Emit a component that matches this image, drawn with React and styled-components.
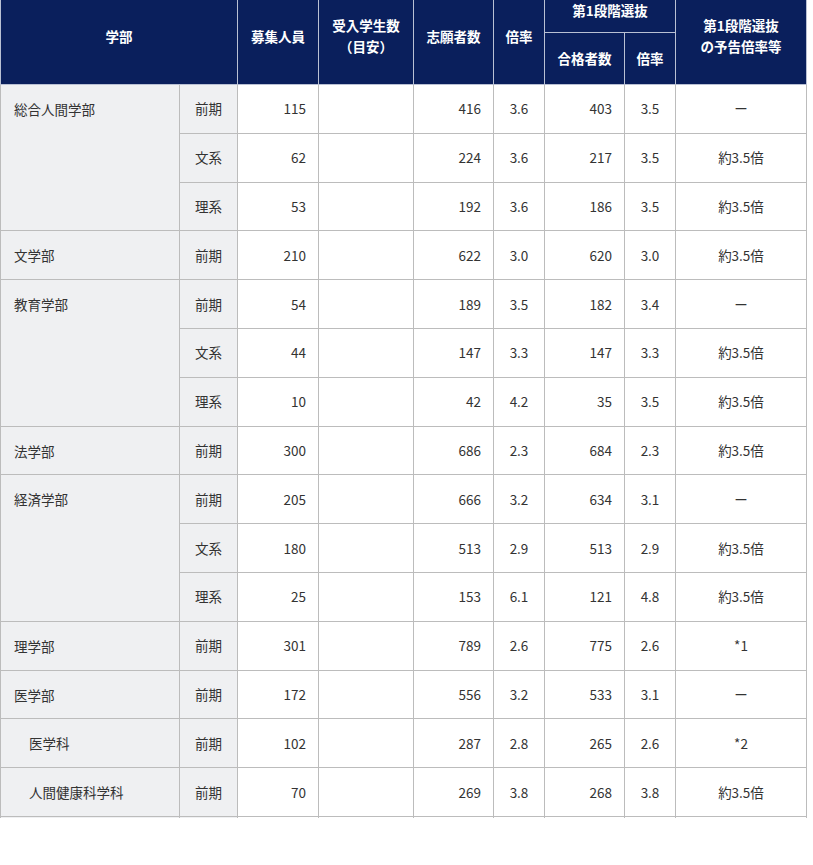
import React from 'react';
import styled, { createGlobalStyle } from 'styled-components';

const GlobalStyle = createGlobalStyle`
  html, body {
    margin: 0;
    padding: 0;
    background: #fff;
  }
  body {
    font-family: 'Noto Sans CJK JP', 'Noto Sans', sans-serif;
    color: #333;
  }
`;

const rows = [
  { name: '総合人間学部', span: 3, term: '前期', cap: 115, app: 416, r1: '3.6', pass: 403, r2: '3.5', note: 'ー' },
  { term: '文系', cap: 62, app: 224, r1: '3.6', pass: 217, r2: '3.5', note: '約3.5倍' },
  { term: '理系', cap: 53, app: 192, r1: '3.6', pass: 186, r2: '3.5', note: '約3.5倍' },
  { name: '文学部', span: 1, term: '前期', cap: 210, app: 622, r1: '3.0', pass: 620, r2: '3.0', note: '約3.5倍' },
  { name: '教育学部', span: 3, term: '前期', cap: 54, app: 189, r1: '3.5', pass: 182, r2: '3.4', note: 'ー' },
  { term: '文系', cap: 44, app: 147, r1: '3.3', pass: 147, r2: '3.3', note: '約3.5倍' },
  { term: '理系', cap: 10, app: 42, r1: '4.2', pass: 35, r2: '3.5', note: '約3.5倍' },
  { name: '法学部', span: 1, term: '前期', cap: 300, app: 686, r1: '2.3', pass: 684, r2: '2.3', note: '約3.5倍' },
  { name: '経済学部', span: 3, term: '前期', cap: 205, app: 666, r1: '3.2', pass: 634, r2: '3.1', note: 'ー' },
  { term: '文系', cap: 180, app: 513, r1: '2.9', pass: 513, r2: '2.9', note: '約3.5倍' },
  { term: '理系', cap: 25, app: 153, r1: '6.1', pass: 121, r2: '4.8', note: '約3.5倍' },
  { name: '理学部', span: 1, term: '前期', cap: 301, app: 789, r1: '2.6', pass: 775, r2: '2.6', note: '*1' },
  { name: '医学部', span: 1, term: '前期', cap: 172, app: 556, r1: '3.2', pass: 533, r2: '3.1', note: 'ー' },
  { name: '医学科', sub: true, span: 1, term: '前期', cap: 102, app: 287, r1: '2.8', pass: 265, r2: '2.6', note: '*2' },
  { name: '人間健康科学科', sub: true, span: 1, term: '前期', cap: 70, app: 269, r1: '3.8', pass: 268, r2: '3.8', note: '約3.5倍' },
  // next row is scrolled out of view; only its cell borders peek in
  { name: ' ', span: 1, term: '', cap: '', app: '', r1: '', pass: '', r2: '', note: '' },
];

const widths = [179, 58, 81, 95, 80, 51, 80, 51, 131];

function App() {
  return (
    <>
      <GlobalStyle />
      <Viewport>
        <Table>
          <colgroup>
            {widths.map((w, i) => (
              <col key={i} style={{ width: w }} />
            ))}
          </colgroup>
          <thead>
            <tr>
              <Th colSpan={2} rowSpan={2}>学部</Th>
              <Th rowSpan={2}>募集人員</Th>
              <Th rowSpan={2}>受入学生数<br />（目安）</Th>
              <Th rowSpan={2}>志願者数</Th>
              <Th rowSpan={2}>倍率</Th>
              <Th colSpan={2} $top>第1段階選抜</Th>
              <Th rowSpan={2}>第1段階選抜<br />の予告倍率等</Th>
            </tr>
            <tr>
              <Th $sub>合格者数</Th>
              <Th $sub>倍率</Th>
            </tr>
          </thead>
          <tbody>
            {rows.map((r, i) => (
              <Row key={i}>
                {r.name && (
                  <NameCell rowSpan={r.span} $sub={r.sub}>
                    {r.name}
                  </NameCell>
                )}
                <TermCell>{r.term}</TermCell>
                <NumCell>{r.cap}</NumCell>
                <NumCell />
                <NumCell>{r.app}</NumCell>
                <MidCell>{r.r1}</MidCell>
                <NumCell>{r.pass}</NumCell>
                <MidCell>{r.r2}</MidCell>
                <MidCell>{r.note}</MidCell>
              </Row>
            ))}
          </tbody>
        </Table>
      </Viewport>
    </>
  );
}

export default App;

const Viewport = styled.div`
  width: 813px;
  height: 818px;
  overflow: hidden;
`;

const Table = styled.table`
  width: 807px;
  margin-top: -12px;
  border-collapse: collapse;
  table-layout: fixed;
  font-size: 13.5px;
  line-height: 21px;
`;

const Th = styled.th`
  background: #0a1f5c;
  color: #fff;
  font-weight: 700;
  text-align: center;
  vertical-align: middle;
  padding: 0 4px;
  border: 1px solid #b9c0d3;
  border-top: none;
  height: ${(p) => (p.$top ? '44px' : p.$sub ? '51px' : 'auto')};
`;

const Row = styled.tr`
  height: 48.8px;
`;

const Cell = styled.td`
  border: 1px solid #bcbcbc;
  padding: 0 12px;
  vertical-align: middle;
  background: #fff;
  white-space: nowrap;
`;

const NameCell = styled(Cell)`
  background: #eff0f2;
  vertical-align: top;
  padding: 14px 12px 0 ${(p) => (p.$sub ? '28px' : '13px')};
`;

const TermCell = styled(Cell)`
  background: #eff0f2;
  text-align: center;
  padding: 0;
`;

const NumCell = styled(Cell)`
  text-align: right;
`;

const MidCell = styled(Cell)`
  text-align: center;
  padding: 0;
`;
